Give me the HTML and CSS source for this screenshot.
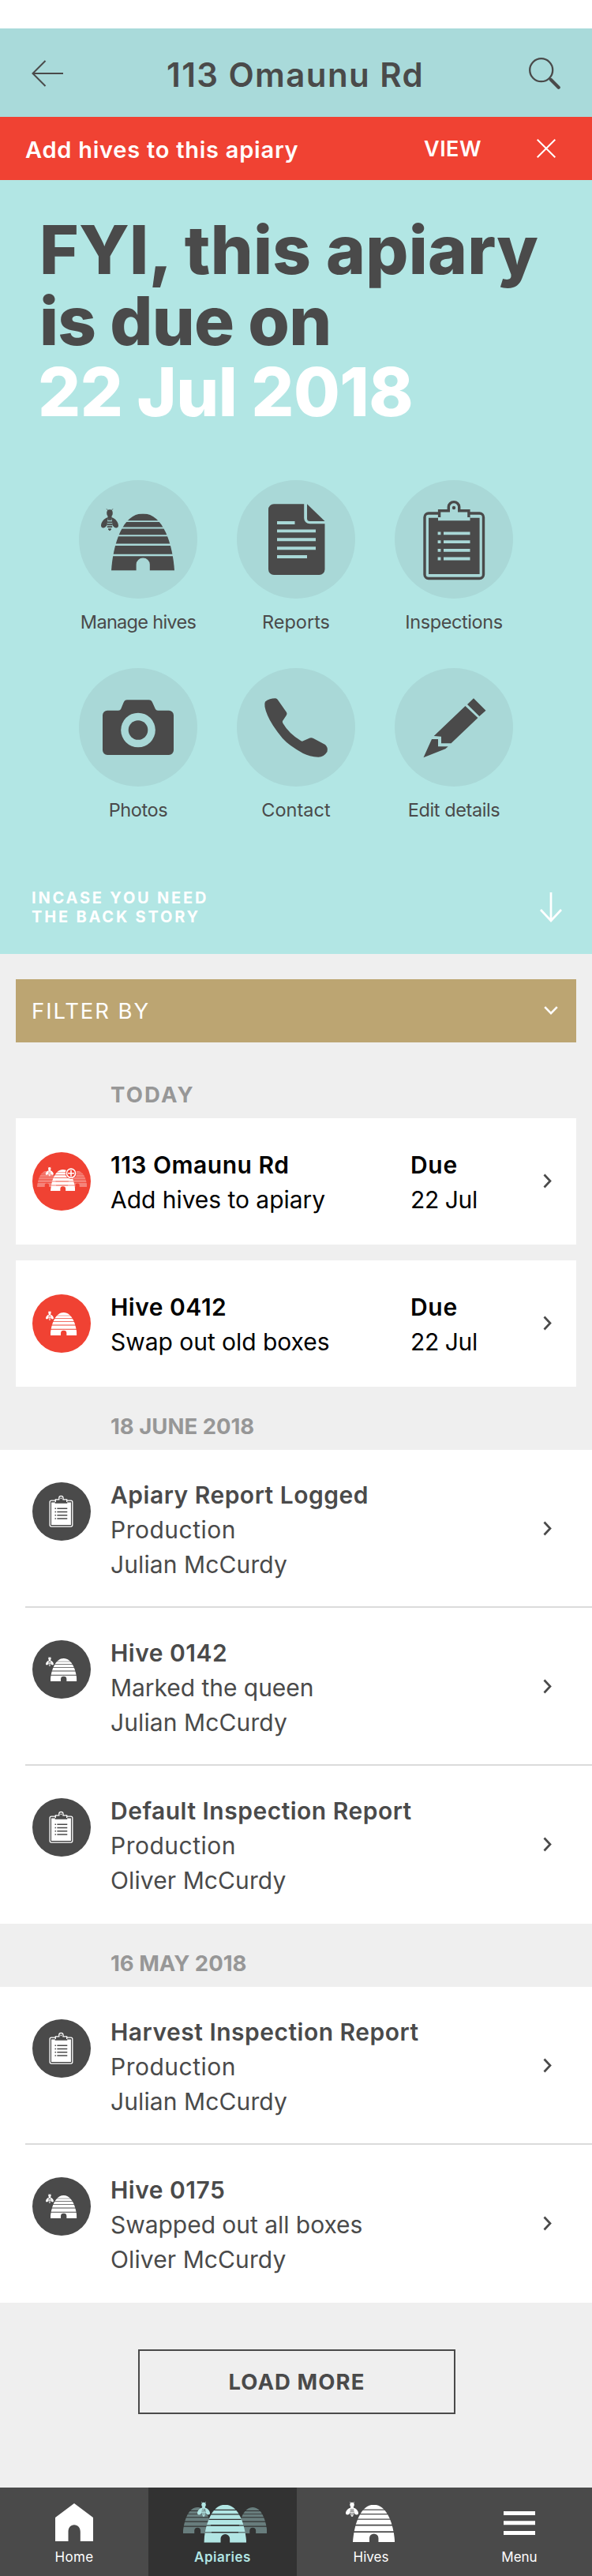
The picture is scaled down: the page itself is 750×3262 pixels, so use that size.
FILE: index.html
```html
<!DOCTYPE html>
<html lang="en">
<head>
<meta charset="utf-8">
<title>113 Omaunu Rd</title>
<link rel="stylesheet" href="styles.css">
</head>
<body>
<svg class="defs" width="0" height="0" aria-hidden="true">
  <defs>
    <mask id="hive-cut" maskUnits="userSpaceOnUse" x="0" y="0" width="80" height="73">
      <path fill="#fff" d="M0 72.3C2 40 14 0 40 0s38 40 40 72.3z"/>
      <path fill="#000" d="M0 9h80v1.8H0zM0 17.2h80v1.9H0zM0 27h80v1.9H0zM0 38.2h80v2.6H0zM0 51.4h80V54H0zM31.6 73V64.500a8.600 8.300 0 0 1 17.200 0V73z"/>
    </mask>
    <g id="hive"><rect width="80" height="72.300" fill="currentColor" mask="url(#hive-cut)"/></g>
    <g id="bee" fill="currentColor">
      <path d="M7 0l2 2.500M15 0l-2 2.500" stroke="currentColor" stroke-width=".8"/>
      <ellipse cx="11" cy="5.400" rx="3.800" ry="4.400"/>
      <path d="M8.800 8h4.400l.8 5H8z"/>
      <path d="M8.500 11C4 12 0 17 0 21.500c.4 4 5.600 3.500 7.600-1zM13.500 11c4.500 1 8.500 6 8.500 10.500-.4 4-5.600 3.500-7.600-1z"/>
      <path d="M8.500 13h5v1.800h-5zM8 16h6v1.900H8zM7.600 19h6.800v1.900H7.600zM7.800 22h6.400v1.800H7.800zM9 25h4v1.300L11 28l-2-1.700z"/>
    </g>
    <g id="clipboard">
      <rect x="38" y="42" width="74.500" height="82.500" rx="5" fill="none" stroke="currentColor" stroke-width="3.400"/>
      <path fill="currentColor" d="M43 47.700h64.600V119H43z"/>
      <path class="cut" stroke="currentColor" stroke-width="3.400" d="M56.600 49V38.800h11.700v-5a6.700 6.200 0 0 1 13.400 0v5h12.200V49"/>
      <path class="cut" d="M55 47h40.500v4.300H55z"/>
      <circle cx="75" cy="35" r="2.200" fill="currentColor"/>
      <path class="cut" d="M54.600 65.500h3.800v3.800h-3.800zM62 65.500h33.500v3.800H62zM54.600 76.200h3.800V80h-3.800zM62 76.200h33.500V80H62zM54.600 87h3.800v3.800h-3.800zM62 87h33.500v3.800H62zM54.600 97.600h3.800v3.800h-3.800zM62 97.600h33.500v3.800H62z"/>
    </g>
    <g id="row-hive">
      <use href="#hive" transform="translate(22.600 23) scale(.425 .405)"/>
      <use href="#bee" transform="translate(17 21) scale(.45 .43)"/>
    </g>
    <g id="row-clipboard"><use href="#clipboard" transform="translate(7.500 6.300) scale(.385 .4)"/></g>
    <path id="chevron" d="M1.500 1.500 9 9.500l-7.500 8" fill="none" stroke="#4a4a4a" stroke-width="2.700"/>
  </defs>
</svg>

<header class="header">
  <svg width="40" height="34" viewBox="0 0 40 34"><path d="M17.500 1 1.500 17l16 16M1.500 17H40" fill="none" stroke="#4a4a4a" stroke-width="2"/></svg>
  <h1 class="header-title">113 Omaunu Rd</h1>
  <svg width="40" height="40" viewBox="0 0 40 40"><g fill="none" stroke="#4a4a4a"><circle cx="15.700" cy="15.700" r="14.500" stroke-width="2.300"/><path d="m26 26 2.500 2.500" stroke-width="2.500"/><path d="M28 28l9.700 9.700" stroke-width="4.200" stroke-linecap="round"/></g></svg>
</header>

<div class="alert">
  <span class="alert-text">Add hives to this apiary</span>
  <span class="alert-view">VIEW</span>
  <svg width="24" height="24" viewBox="0 0 24 24"><path d="M.7.7l22.600 22.600M23.300.7.7 23.300" stroke="#fff" stroke-width="2"/></svg>
</div>

<section class="hero">
  <h2 class="hero-title">
    <span class="line line-a">FYI, this apiary</span>
    <span class="line line-b">is due on</span>
    <span class="line line-date">22 Jul 2018</span>
  </h2>
  <div class="actions">
    <div class="action">
      <svg class="action-icon" viewBox="0 0 150 150"><use href="#hive" x="41" y="42.300"/><use href="#bee" x="28" y="36.300"/></svg>
      <span class="label manage">Manage hives</span>
    </div>
    <div class="action">
      <svg class="action-icon" viewBox="0 0 150 150">
        <path fill="currentColor" d="M47 30.300h38.200V48a7.300 7.300 0 0 0 7.300 7.300h19V113a7 7 0 0 1-7 7H47a7 7 0 0 1-7-7V37.300a7 7 0 0 1 7-7z"/>
        <path fill="currentColor" d="M89 30.300 111.500 52H92.500A3.500 3.500 0 0 1 89 48.500z"/>
        <path class="cut" d="M51 52h22.500v3.900H51zM51 62.400h49v3.900H51zM51 73.300h49v3.900H51zM51 84.300h49v3.900H51zM51 95h38v3.900H51z"/>
      </svg>
      <span class="label">Reports</span>
    </div>
    <div class="action">
      <svg class="action-icon" viewBox="0 0 150 150"><use href="#clipboard"/></svg>
      <span class="label snug">Inspections</span>
    </div>
    <div class="action">
      <svg class="action-icon" viewBox="0 0 150 150">
        <path fill="currentColor" d="M36 53.700h14q2.300 0 3.200-2l3.300-8q1.400-3.400 4.500-3.400h27.500q3.300 0 4.700 3.400l3.600 8q.9 2 3.200 2h14a6 6 0 0 1 6 6V104a6 6 0 0 1-6 6H36a6 6 0 0 1-6-6V59.700a6 6 0 0 1 6-6z"/>
        <circle class="cut" cx="75" cy="78.500" r="21.800"/><circle fill="currentColor" cx="75" cy="78.500" r="12.300"/>
      </svg>
      <span class="label snug">Photos</span>
    </div>
    <div class="action">
      <svg class="action-icon" viewBox="0 0 150 150"><path fill="currentColor" d="M50 38.400Q51.500 39.200 52.500 41L63 56Q64 57.700 63 59.500L58 67Q57.500 68 58.500 70 66 83 81.500 92.300 83 93 84 92.300L92.500 88.500Q95 87.700 97 89L112 97Q116 100.500 114.500 106 110 113 103 112.700 92 112 84 108 66 98 58 89 44 72 39 60 33.500 47 36 42.500 42 38 50 38.400z"/></svg>
      <span class="label">Contact</span>
    </div>
    <div class="action">
      <svg class="action-icon" viewBox="0 0 150 150"><path fill="currentColor" d="M100 38.300 115.500 53.700 107.300 61 92 46zM89.500 48 105.400 63 71.500 95.300H59V86.700L49.700 86zM47 90h8v9.300h12.700l-3.400 3-27.800 11z"/></svg>
      <span class="label snug">Edit details</span>
    </div>
  </div>
  <div class="backstory">
    <p class="backstory-text">INCASE YOU NEED<br>THE BACK STORY</p>
    <svg width="28" height="38" viewBox="0 0 28 38"><path d="M14 0v36M1 22l13 14 13-14" fill="none" stroke="#fff" stroke-width="2.700"/></svg>
  </div>
</section>

<main class="feed">
  <div class="filter">
    <span>FILTER BY</span>
    <svg width="18" height="12" viewBox="0 0 18 12"><path d="M1.200 1.200 9 9.200l7.800-8" fill="none" stroke="#fff" stroke-width="2.600"/></svg>
  </div>

  <h3 class="day day-today">TODAY</h3>
  <article class="card">
    <svg class="badge badge-due" viewBox="0 0 74 74">
      <g opacity=".35"><use href="#hive" transform="translate(6 23.700) scale(.308 .282)"/><use href="#hive" transform="translate(44.700 23.700) scale(.308 .282)"/></g>
      <use href="#hive" transform="translate(23 22) scale(.392 .378)"/>
      <use href="#bee" transform="translate(16.700 18.700) scale(.46 .42)"/>
      <circle class="cut" cx="49" cy="26.700" r="7.200"/>
      <circle cx="49" cy="26.700" r="5.600" fill="none" stroke="currentColor" stroke-width="1.600"/>
      <path d="M49 22.700v8M45 26.700h8" stroke="currentColor" stroke-width="1.600"/>
    </svg>
    <div class="info"><b>113 Omaunu Rd</b><span class="tight">Add hives to apiary</span></div>
    <div class="due"><b>Due</b><span>22 Jul</span></div>
    <svg class="chevron" viewBox="0 0 12 19"><use href="#chevron"/></svg>
  </article>
  <article class="card">
    <svg class="badge badge-due" viewBox="0 0 74 74"><use href="#row-hive"/></svg>
    <div class="info"><b>Hive 0412</b><span class="tight">Swap out old boxes</span></div>
    <div class="due"><b>Due</b><span>22 Jul</span></div>
    <svg class="chevron" viewBox="0 0 12 19"><use href="#chevron"/></svg>
  </article>

  <h3 class="day">18 JUNE 2018</h3>
  <div class="list">
    <article class="row">
      <svg class="badge" viewBox="0 0 74 74"><use href="#row-clipboard"/></svg>
      <div class="info"><b>Apiary Report Logged</b><span class="wide">Production</span><span>Julian McCurdy</span></div>
      <svg class="chevron" viewBox="0 0 12 19"><use href="#chevron"/></svg>
    </article>
    <article class="row">
      <svg class="badge" viewBox="0 0 74 74"><use href="#row-hive"/></svg>
      <div class="info"><b>Hive 0142</b><span class="tight">Marked the queen</span><span>Julian McCurdy</span></div>
      <svg class="chevron" viewBox="0 0 12 19"><use href="#chevron"/></svg>
    </article>
    <article class="row">
      <svg class="badge" viewBox="0 0 74 74"><use href="#row-clipboard"/></svg>
      <div class="info"><b>Default Inspection Report</b><span class="wide">Production</span><span>Oliver McCurdy</span></div>
      <svg class="chevron" viewBox="0 0 12 19"><use href="#chevron"/></svg>
    </article>
  </div>

  <h3 class="day">16 MAY 2018</h3>
  <div class="list">
    <article class="row">
      <svg class="badge" viewBox="0 0 74 74"><use href="#row-clipboard"/></svg>
      <div class="info"><b>Harvest Inspection Report</b><span class="wide">Production</span><span>Julian McCurdy</span></div>
      <svg class="chevron" viewBox="0 0 12 19"><use href="#chevron"/></svg>
    </article>
    <article class="row">
      <svg class="badge" viewBox="0 0 74 74"><use href="#row-hive"/></svg>
      <div class="info"><b>Hive 0175</b><span class="tight">Swapped out all boxes</span><span>Oliver McCurdy</span></div>
      <svg class="chevron" viewBox="0 0 12 19"><use href="#chevron"/></svg>
    </article>
  </div>

  <button class="load-more">LOAD MORE</button>
</main>

<nav class="tabs">
  <a class="tab">
    <svg class="tab-icon" viewBox="0 0 120 66"><path fill="currentColor" d="M60 10 84 28v30H67.800V46c0-5-3-8.700-7.800-8.700s-7.500 3.700-7.500 8.700v12H36V28z"/></svg>
    <span class="home">Home</span>
  </a>
  <a class="tab tab-active">
    <svg class="tab-icon" viewBox="0 0 120 66">
      <g opacity=".42"><use href="#hive" transform="translate(9.700 15) scale(.46 .458)"/><use href="#hive" transform="translate(79.700 15) scale(.46 .458)"/></g>
      <use href="#hive" transform="translate(36.200 11.700) scale(.675 .665)"/>
      <use href="#bee" transform="translate(28 8) scale(.73 .68)"/>
    </svg>
    <span>Apiaries</span>
  </a>
  <a class="tab">
    <svg class="tab-icon" viewBox="0 0 120 66"><use href="#hive" transform="translate(37 11.700) scale(.665 .655)"/><use href="#bee" transform="translate(28 8) scale(.73 .68)"/></svg>
    <span>Hives</span>
  </a>
  <a class="tab">
    <svg class="tab-icon" viewBox="0 0 120 66"><path fill="currentColor" d="M40 20h40v5H40zM40 32.300h40v5H40zM40 45h40v5H40z"/></svg>
    <span>Menu</span>
  </a>
</nav>
</body>
</html>
```
FILE: styles.css
```css
* { box-sizing: border-box; }

body {
  margin: 0;
  padding-top: 36px;
  width: 750px;
  background: #fff;
  color: #4a4a4a;
  font-family: Inter, "Liberation Sans", sans-serif;
  white-space: nowrap;
}

h1, h2, h3, p { margin: 0; }
svg { display: block; flex: none; }
.defs { position: absolute; }
.cut { fill: var(--backdrop); }

/* Header */
.header {
  display: flex;
  align-items: center;
  justify-content: space-between;
  height: 112px;
  padding: 2px 40px 0;
  background: #a9dada;
}
.header-title {
  padding: 2px 2px 0 0;
  font-size: 42px;
  font-weight: 600;
  letter-spacing: 1.4px;
}

/* Alert bar */
.alert {
  display: flex;
  align-items: center;
  height: 80px;
  padding: 0 46px 0 32px;
  background: #f04233;
  color: #fff;
  font-weight: 600;
}
.alert-text {
  flex: 1;
  padding-top: 2px;
  font-size: 29px;
  letter-spacing: .76px;
}
.alert-view {
  width: 143px;
  font-size: 27px;
  letter-spacing: .5px;
}

/* Hero */
.hero {
  height: 980px;
  padding-top: 44px;
  background: #b2e6e4;
}
.hero-title {
  padding-left: 50px;
  font-size: 85px;
  font-weight: 800;
  line-height: 90px;
}
.line { display: block; }
.line-a { letter-spacing: .2px; }
.line-b { letter-spacing: -.7px; }
.line-date { color: #fff; margin-left: -2px; letter-spacing: -.5px; }

.actions {
  display: grid;
  grid-template-columns: repeat(3, 150px);
  gap: 43px 50px;
  padding: 66px 100px 0;
}
.action {
  display: flex;
  flex-direction: column;
  align-items: center;
  gap: 15px;
}
.action-icon {
  --backdrop: #a9d8d7;
  width: 150px;
  height: 150px;
  border-radius: 50%;
  background: #a9d8d7;
}
.label { font-size: 23.5px; line-height: 30px; }
.snug { letter-spacing: -.4px; }
.manage { letter-spacing: -.7px; }

.backstory {
  display: flex;
  align-items: center;
  justify-content: space-between;
  padding: 84px 38px 0 40px;
  color: #fff;
}
.backstory-text {
  font-size: 20px;
  font-weight: 700;
  line-height: 24px;
  letter-spacing: 2.8px;
}

/* Feed */
.feed {
  height: 1942px;
  padding-top: 32px;
  background: #efefef;
}
.filter {
  display: flex;
  align-items: center;
  justify-content: space-between;
  height: 80px;
  margin: 0 20px;
  padding: 0 23px 0 20px;
  background: #bca572;
  color: #fff;
  font-size: 27.5px;
  letter-spacing: 1.9px;
}
.day {
  height: 80px;
  padding: 30px 0 0 140px;
  color: #979797;
  font-size: 27.5px;
  font-weight: 700;
  line-height: 40px;
}
.day-today { margin-top: 16px; letter-spacing: 2.2px; }

.card, .row {
  display: flex;
  font-size: 30px;
  line-height: 44px;
}
.card {
  height: 160px;
  margin: 0 20px;
  padding: 37px 30px 0 21px;
  background: #fff;
  color: #000;
}
.card + .card { margin-top: 20px; }
.list { background: #fff; padding-left: 32px; }
.row {
  height: 200px;
  padding: 35px 50px 0 9px;
}
.row + .row { box-shadow: 0 -2px #dbdbdb; }

.badge {
  --backdrop: #4a4a4a;
  width: 74px;
  height: 74px;
  margin: 6px 25px 0 0;
  border-radius: 50%;
  background: #4a4a4a;
  color: #fff;
}
.badge-due { --backdrop: #f04233; background: #f04233; }
.info { flex: 1; }
.info b, .info span, .due b, .due span { display: block; }
b { font-weight: 600; letter-spacing: .5px; }
.info span { letter-spacing: .1px; }
.info .tight { letter-spacing: -.04px; }
.info .wide { letter-spacing: .5px; }
.due { width: 168px; }
.due b { letter-spacing: .7px; }
.due span { letter-spacing: -.4px; }
.chevron { width: 12px; height: 19px; }
.card .chevron { margin-top: 33px; }
.row .chevron { margin-top: 55px; }

.load-more {
  display: block;
  width: 402px;
  height: 82px;
  margin: 59px 0 0 175px;
  padding: 0;
  border: 2px solid #4a4a4a;
  background: none;
  color: #4a4a4a;
  font: 700 27.5px Inter, "Liberation Sans", sans-serif;
  letter-spacing: 1.1px;
}

/* Tab bar */
.tabs {
  display: flex;
  height: 112px;
  overflow: hidden;
  background: #4a4a4a;
  color: #fff;
}
.tab {
  display: flex;
  flex: none;
  flex-direction: column;
  align-items: center;
  width: 188px;
  padding-top: 10px;
  font-size: 17px;
  line-height: 20px;
}
.tab-icon { width: 120px; height: 66px; margin-bottom: 2px; }
.home { letter-spacing: .4px; }
.tab-active {
  background: #323232;
  color: #b2e6e4;
  font-weight: 600;
  letter-spacing: .5px;
}
```
